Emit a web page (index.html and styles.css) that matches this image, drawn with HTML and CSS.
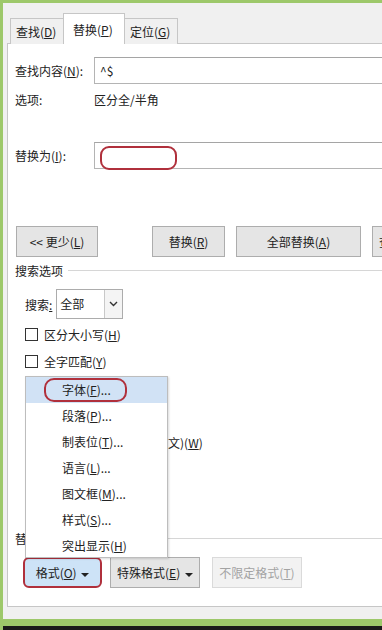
FILE: index.html
```html
<!DOCTYPE html>
<html lang="zh-CN">
<head>
    <meta charset="UTF-8">
    <meta name="viewport" content="width=device-width, initial-scale=1.0">
    <title>查找和替换</title>
    <link rel="stylesheet" href="styles.css">
</head>
<body>

    <div class="window">
        <div class="tabs">
            <div class="tab">查找(<u>D</u>)</div>
            <div class="tab active">替换(<u>P</u>)</div>
            <div class="tab">定位(<u>G</u>)</div>
        </div>

        <div class="panel">
            <div class="row first">
                <span class="label">查找内容(<u>N</u>):</span>
                <div class="field">^$</div>
            </div>
            <div class="row plain">
                <span class="label">选项:</span>
                <span>区分全/半角</span>
            </div>
            <div class="row replace">
                <span class="label">替换为(<u>I</u>):</span>
                <div class="field">
                    <span class="mark"></span>
                </div>
            </div>

            <div class="buttons">
                <button class="btn less">&lt;&lt; 更少(<u>L</u>)</button>
                <button class="btn replace-one">替换(<u>R</u>)</button>
                <button class="btn replace-all">全部替换(<u>A</u>)</button>
                <button class="btn next">查找下一处(<u>F</u>)</button>
            </div>

            <div class="group-title">搜索选项</div>

            <div class="search-row">
                <span>搜索<u>:</u></span>
                <div class="select">
                    <span class="select-value">全部</span>
                    <span class="select-arrow">
                        <svg width="9" height="6" viewBox="0 0 9 6"><path d="M1 1 L4.5 4.5 L8 1" fill="none" stroke="#333" stroke-width="1.4"/></svg>
                    </span>
                </div>
            </div>

            <label class="check"><span class="box"></span>区分大小写(<u>H</u>)</label>
            <label class="check"><span class="box"></span>全字匹配(<u>Y</u>)</label>
            <label class="check"><span class="box"></span>使用通配符(<u>U</u>)</label>
            <label class="check"><span class="box"></span>同音(英文)(<u>K</u>)</label>
            <label class="check"><span class="box"></span>查找单词的所有形式(英文)(<u>W</u>)</label>

            <div class="group-title bottom">替换</div>

            <div class="buttons format">
                <button class="btn format-btn">格式(<u>O</u>) <span class="caret"></span></button>
                <button class="btn special">特殊格式(<u>E</u>) <span class="caret"></span></button>
                <button class="btn disabled">不限定格式(<u>T</u>)</button>
            </div>

            <div class="menu">
                <div class="item selected"><span class="ring">字体(<u>F</u>)...</span></div>
                <div class="item">段落(<u>P</u>)...</div>
                <div class="item">制表位(<u>T</u>)...</div>
                <div class="item">语言(<u>L</u>)...</div>
                <div class="item">图文框(<u>M</u>)...</div>
                <div class="item">样式(<u>S</u>)...</div>
                <div class="item">突出显示(<u>H</u>)</div>
            </div>
        </div>

        <div class="footer"></div>
    </div>

</body>
</html>
```

FILE: styles.css
```css
html, body {
    margin: 0;
    padding: 0;
    width: 382px;
    height: 630px;
    overflow: hidden;
}
body {
    font-family: "Noto Sans CJK SC", "Microsoft YaHei", sans-serif;
    font-size: 12px;
    color: #222;
    background-color: #f0f0f0;
}
u {
    text-decoration: underline;
    text-underline-offset: 1px;
}
.window {
    height: 630px;
    box-sizing: border-box;
    border-top: 3px solid #9dc86a;
    border-left: 3px solid #9dc86a;
    display: flex;
    flex-direction: column;
}
.tabs {
    display: flex;
    align-items: flex-end;
    margin: 10px 0 -1px 7px;
    position: relative;
    z-index: 1;
}
.tab {
    height: 26px;
    line-height: 26px;
    padding: 0 5px;
    border: 1px solid #c6c6c6;
    border-bottom: none;
    background-color: #f0f0f0;
    box-sizing: border-box;
    width: 54px;
}
.tab + .tab {
    margin-left: -1px;
}
.tab.active {
    height: 31px;
    line-height: 31px;
    width: 62px;
    padding: 0 9px;
    background-color: #fff;
}
.panel {
    position: relative;
    margin-left: 4px;
    width: 420px;
    background-color: #fff;
    border: 1px solid #c6c6c6;
    padding: 0 0 18px 7px;
}
.row {
    display: flex;
    align-items: center;
}
.row.first {
    margin-top: 13px;
}
.row.plain {
    height: 20px;
    margin-top: 5px;
}
.row.replace {
    margin-top: 33px;
}
.label {
    width: 79px;
    flex-shrink: 0;
}
.field {
    position: relative;
    flex: 1;
    height: 27px;
    line-height: 25px;
    box-sizing: border-box;
    border: 1px solid #b4b4b4;
    border-top-color: #a5a5a5;
    padding-left: 5px;
    background-color: #fff;
}
.mark {
    position: absolute;
    left: 5px;
    top: 3px;
    width: 77px;
    height: 24px;
    box-sizing: border-box;
    border: 2px solid #b0303c;
    border-radius: 9px;
}
.buttons {
    display: flex;
    margin-top: 57px;
}
.btn {
    font-family: inherit;
    font-size: 12px;
    color: #222;
    height: 31px;
    background-color: #e5e5e5;
    border: 1px solid #adadad;
    padding: 0;
    flex-shrink: 0;
}
.less {
    width: 82px;
    margin-left: 1px;
}
.replace-one {
    width: 73px;
    margin-left: 54px;
}
.replace-all {
    width: 125px;
    margin-left: 11px;
}
.next {
    width: 100px;
    margin-left: 11px;
    text-align: left;
    padding-left: 6px;
}
.group-title {
    display: flex;
    align-items: center;
    height: 16px;
    margin-top: 5px;
}
.group-title::after {
    content: "";
    flex: 1;
    border-top: 1px solid #d6d6d6;
    margin-left: 5px;
}
.group-title.bottom {
    margin-top: 78px;
}
.search-row {
    display: flex;
    align-items: center;
    margin: 11px 0 0 10px;
}
.select {
    display: flex;
    margin-left: 4px;
    width: 67px;
    height: 30px;
    box-sizing: border-box;
    border: 1px solid #acacac;
}
.select-value {
    flex: 1;
    line-height: 28px;
    padding-left: 3px;
}
.select-arrow {
    width: 17px;
    border-left: 1px solid #c8c8c8;
    display: flex;
    align-items: center;
    justify-content: center;
    background-color: #f4f4f4;
}
.check {
    display: flex;
    align-items: center;
    height: 20px;
    margin: 5px 0 0 10px;
}
.check + .check {
    margin-top: 7px;
}
.box {
    width: 11px;
    height: 11px;
    border: 1px solid #333;
    background-color: #fff;
    margin-right: 6px;
}
.buttons.format {
    margin-top: 11px;
    padding-left: 8px;
}
.format-btn {
    width: 79px;
    background-color: #cde3f7;
    border: 2px solid #b0303c;
    border-radius: 6px;
}
.special {
    width: 90px;
    margin-left: 8px;
}
.disabled {
    width: 90px;
    margin-left: 12px;
    background-color: #f2f2f2;
    border-color: #dadada;
    color: #a3a3a3;
}
.caret {
    display: inline-block;
    vertical-align: middle;
    margin-left: 2px;
    border-left: 4px solid transparent;
    border-right: 4px solid transparent;
    border-top: 4px solid #222;
}
.menu {
    position: absolute;
    left: 17px;
    top: 332px;
    width: 143px;
    height: 182px;
    box-sizing: border-box;
    background-color: #fff;
    border: 1px solid #bdbdbd;
    box-shadow: 1px 1px 2px rgba(0, 0, 0, 0.15);
}
.item {
    height: 26px;
    line-height: 26px;
    padding-left: 36px;
}
.item.selected {
    background-color: #d1e2f5;
    padding-left: 18px;
    display: flex;
    align-items: center;
}
.ring {
    display: inline-block;
    height: 24px;
    line-height: 20px;
    box-sizing: border-box;
    border: 2px solid #b0303c;
    border-radius: 10px;
    padding: 0 14px 0 16px;
}
.footer {
    margin-top: auto;
    height: 7px;
    background-color: #9dc86a;
    border-bottom: 4px solid #1a1a1a;
}
```
